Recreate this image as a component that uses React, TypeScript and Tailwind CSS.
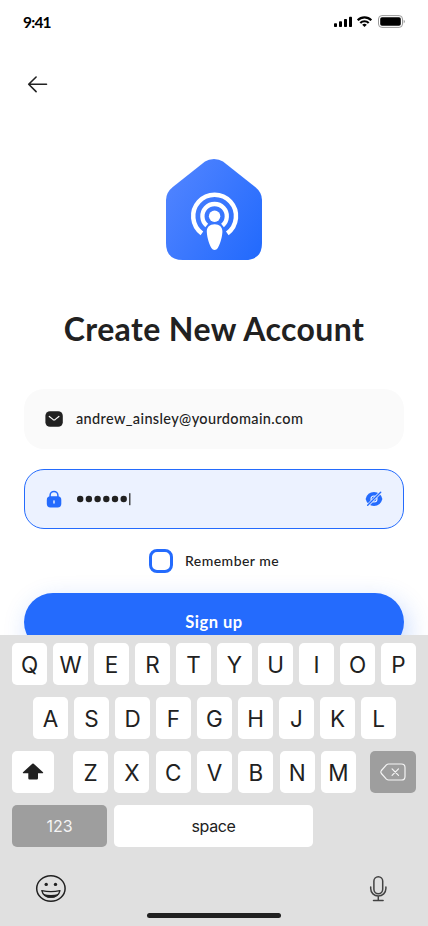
import type { ReactNode } from 'react';

const FONT = "font-['Lato','Noto_Sans',sans-serif]";

function StatusBar() {
  return (
    <header className="flex h-[44px] items-center justify-between pl-[23px] pr-[23px]">
      <span className="w-[27px] whitespace-nowrap text-[15.5px] font-bold leading-5 tracking-[-0.8px] text-black">9:41</span>
      <svg width="71" height="14" viewBox="334 16 71 14" fill="#000">
        <rect x="334" y="24.2" width="3" height="3.8" rx="0.8" />
        <rect x="339" y="22.2" width="3" height="5.8" rx="0.8" />
        <rect x="344" y="20" width="3" height="8" rx="0.8" />
        <rect x="349" y="17.8" width="3" height="10.2" rx="0.8" />
        <g fill="none" stroke="#000" strokeWidth="2.200">
          <path d="M357.700 21.200A9.600 9.600 0 0 1 371.300 21.200" />
          <path d="M360.300 24A5.900 5.900 0 0 1 368.700 24" />
        </g>
        <path d="M362.200 25.700A3.400 3.400 0 0 1 366.800 25.700L364.500 28Z" />
        <rect x="378.500" y="16.600" width="24" height="11.800" rx="3.400" fill="none" stroke="#9a9a9a" />
        <rect x="380.200" y="18.300" width="20.600" height="8.400" rx="1.800" />
        <path d="M403.700 20.800v3.600a2 2 0 0 0 0-3.600Z" fill="#9a9a9a" />
      </svg>
    </header>
  );
}

function Logo() {
  return (
    <svg className="mx-auto block" width="96" height="101" viewBox="166 159 96 101">
      <defs>
        <linearGradient id="house" x1="262" y1="245" x2="166" y2="185" gradientUnits="userSpaceOnUse">
          <stop stopColor="#246BFD" />
          <stop offset="1" stopColor="#4F83FF" />
        </linearGradient>
      </defs>
      <path
        d="M205 161.600Q208.600 159 214 159Q219.400 159 223 161.600L255.500 187.200Q262 192.500 262 200V243Q262 260 245 260H183Q166 260 166 243V200Q166 192.500 172.500 187.200Z"
        fill="url(#house)"
      />
      <g fill="none" stroke="#fff">
        <path d="M201.900 233.400A21.400 21.400 0 1 1 227.300 233.400" strokeWidth="4.500" />
        <path d="M206.700 225.500A12.200 12.200 0 1 1 222.500 225.500" strokeWidth="4.300" />
      </g>
      <circle cx="214.600" cy="216.200" r="5.700" fill="#fff" />
      <path d="M214.600 224.300C219.500 224.300 222.700 227.300 222.400 232C222 239 219.500 245 217.800 248.100C216.300 250.700 212.900 250.700 211.400 248.100C209.700 245 207.200 239 206.800 232C206.500 227.300 209.700 224.300 214.600 224.300Z" fill="#fff" />
    </svg>
  );
}

function MailIcon() {
  return (
    <svg width="20" height="20" viewBox="44 409 20 20">
      <rect x="45.400" y="411.200" width="17.400" height="15.600" rx="4.600" fill="#212121" />
      <path d="M49.300 416.500L52.900 419.400Q54.100 420.300 55.300 419.400L58.900 416.500" fill="none" stroke="#fafafa" strokeWidth="1.200" strokeLinecap="round" />
    </svg>
  );
}

function LockIcon() {
  return (
    <svg width="20" height="20" viewBox="44 489 20 20">
      <path d="M50.100 498V495.300A3.900 3.900 0 0 1 57.900 495.300V498" fill="none" stroke="#246BFD" strokeWidth="1.500" />
      <rect x="46.800" y="496.300" width="14.500" height="11.200" rx="3.700" fill="#246BFD" />
      <path d="M54 500.800V503" stroke="#fff" strokeWidth="1.300" strokeLinecap="round" />
    </svg>
  );
}

function PasswordDots() {
  return (
    <svg width="56" height="14" viewBox="76 493 56 14" fill="#212121">
      {[0, 1, 2, 3, 4, 5].map((i) => (
        <circle key={i} cx={80.2 + i * 8.7} cy="500" r="3.200" />
      ))}
      <rect x="129.200" y="494.200" width="1.200" height="12" />
    </svg>
  );
}

function HiddenEyeIcon() {
  return (
    <svg width="20" height="20" viewBox="364 489 20 20">
      <path d="M365.600 499Q367.500 492.100 374 492.100Q380.500 492.100 382.400 499Q380.500 505.900 374 505.900Q367.500 505.900 365.600 499Z" fill="#246BFD" />
      <circle cx="374" cy="499" r="3" fill="#246BFD" stroke="#ecf2ff" strokeWidth="1.100" />
      <path d="M367.100 505.900L380.900 492.100" stroke="#ecf2ff" strokeWidth="2.800" />
      <path d="M367.700 505.300L380.700 492.300" stroke="#246BFD" strokeWidth="1.400" strokeLinecap="round" />
    </svg>
  );
}

function Key({ children, className = 'w-[35px] bg-white' }: { children: ReactNode; className?: string }) {
  return (
    <button className={`flex h-[42px] shrink-0 items-center justify-center rounded-[5px] text-[22.5px] leading-none text-[#212121] ${className}`}>
      {children}
    </button>
  );
}

function Keys({ letters }: { letters: string }) {
  return (
    <>
      {letters.split('').map((letter) => (
        <Key key={letter}><span className="pt-[2px]">{letter}</span></Key>
      ))}
    </>
  );
}

function Keyboard() {
  return (
    <section className="flex h-[291px] flex-col bg-[#e0e0e0] px-3 pt-2 font-['Inter','Roboto',sans-serif]">
      <div className="flex flex-col gap-3">
        <div className="flex justify-between"><Keys letters="QWERTYUIOP" /></div>
        <div className="flex justify-between pl-[21px] pr-5"><Keys letters="ASDFGHJKL" /></div>
        <div className="flex justify-between">
          <Key className="w-[42px] bg-white">
            <svg width="22" height="18" viewBox="24 763 22 18">
              <path d="M34.300 763.700Q35 763.100 35.700 763.700L45 772.200Q45.700 773.200 44.600 773.200H40V778.300Q40 779.500 38.800 779.500H31.500Q30.300 779.500 30.300 778.300V773.200H25.400Q24.300 773.200 25 772.200Z" fill="#212121" />
            </svg>
          </Key>
          <div className="ml-[5px] flex w-[283px] justify-between"><Keys letters="ZXCVBNM" /></div>
          <Key className="w-[46px] bg-[#9e9e9e]">
            <svg width="26" height="18" viewBox="0 0 26 18" fill="none" stroke="#f5f5f5" strokeLinejoin="round" strokeLinecap="round">
              <path d="M8.600 1H21.400Q25 1 25 4.600V13.400Q25 17 21.400 17H8.600Q7.400 17 6.400 16.100L1.400 10.500Q.3 9 1.400 7.500L6.400 1.900Q7.400 1 8.600 1Z" strokeWidth="1.200" />
              <path d="M12.100 5.900L18.500 12.300M18.500 5.900L12.100 12.300" strokeWidth="1.200" />
            </svg>
          </Key>
        </div>
        <div className="flex gap-[7px]">
          <Key className="w-[95px] bg-[#9e9e9e]"><span className="text-[16px] text-[#f5f5f5]">123</span></Key>
          <Key className="w-[199px] bg-white"><span className="text-[16px] tracking-[-0.4px]">space</span></Key>
        </div>
      </div>
      <div className="mt-[26px] flex justify-between pl-[23px] pr-[28px]">
        <svg width="32" height="30" viewBox="35 873 32 30">
          <ellipse cx="50.900" cy="888.500" rx="14.200" ry="12.700" fill="none" stroke="#212121" strokeWidth="1.500" />
          <circle cx="46.200" cy="884.400" r="1.700" fill="#212121" />
          <circle cx="55.500" cy="884.400" r="1.700" fill="#212121" />
          <path d="M41.800 890.600Q50.900 892.500 60 890.600Q58.500 897.200 50.900 897.200Q43.300 897.200 41.800 890.600Z" fill="#e0e0e0" stroke="#212121" strokeWidth="1.300" strokeLinejoin="round" />
          <path d="M43.400 893.900Q50.900 895.900 58.400 893.900Q56 897.800 50.900 897.800Q45.800 897.800 43.400 893.900Z" fill="#212121" />
        </svg>
        <svg width="20" height="30" viewBox="368 873 20 30" fill="none" stroke="#424242" strokeWidth="1.500" strokeLinecap="round">
          <rect x="373.900" y="876.700" width="8.800" height="17" rx="4.400" />
          <path d="M370.700 887V888.500A7.600 7.600 0 0 0 385.900 888.500V887M378.300 896.200V900.400M373.500 900.400H383.100" />
        </svg>
      </div>
      <div className="mx-auto mt-[10px] h-[5px] w-[134px] rounded-full bg-[#212121]" />
    </section>
  );
}

export default function App() {
  return (
    <div className={`mx-auto h-[926px] w-[428px] overflow-hidden bg-white text-[#212121] ${FONT}`}>
      <main className="h-[635px] overflow-hidden">
        <StatusBar />
        <button className="ml-6 mt-[26px] flex h-7 w-7 items-center justify-center" aria-label="Back">
          <svg width="28" height="28" viewBox="24 70 28 28" fill="none" stroke="#212121" strokeWidth="1.600" strokeLinecap="round" strokeLinejoin="round">
            <path d="M46.500 84.300H28.700M36.100 77L28.700 84.300L36.100 91.600" />
          </svg>
        </button>
        <div className="mt-[61px]"><Logo /></div>
        <h1 className="mt-[49px] whitespace-nowrap text-center text-[32px] font-bold leading-10 tracking-[0.4px]">Create New Account</h1>
        <form className="mt-10 flex flex-col px-6">
          <div className="flex h-[60px] items-center gap-3 rounded-[20px] bg-[#fafafa] px-5">
            <MailIcon />
            <span className="text-[14.5px] font-medium leading-5 tracking-[0.370px]">andrew_ainsley@yourdomain.com</span>
          </div>
          <div className="mt-5 flex h-[60px] items-center rounded-[20px] border border-[#246bfd] bg-[#ecf2ff] px-[19px]">
            <LockIcon />
            <div className="ml-3 flex-1"><PasswordDots /></div>
            <HiddenEyeIcon />
          </div>
          <label className="mt-5 flex h-6 items-center gap-3 pl-[125px]">
            <span className="h-6 w-6 rounded-[8px] border-3 border-[#246bfd]" />
            <span className="text-[14px] font-medium leading-5 tracking-[0.460px]">Remember me</span>
          </label>
          <button type="button" className="mt-5 flex h-[58px] items-center justify-center rounded-full bg-[#246bfd] text-[16.5px] font-bold tracking-[0.500px] text-white shadow-[4px_8px_24px_rgba(36,107,253,0.25)]">Sign up</button>
        </form>
      </main>
      <Keyboard />
    </div>
  );
}
